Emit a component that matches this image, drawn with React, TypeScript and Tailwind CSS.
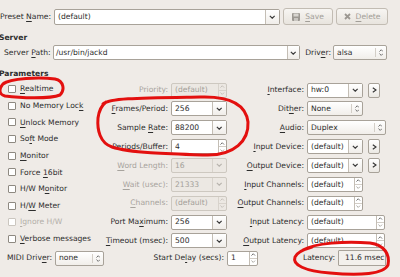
import React from 'react';

type WProps = { value: string; w: string; dim?: boolean };

function Mn({ t, u = -1 }: { t: string; u?: number }) {
  if (u < 0) return <>{t}</>;
  return (
    <>
      {t.slice(0, u)}
      <span className="underline decoration-[0.8px] underline-offset-[1.5px]">{t[u]}</span>
      {t.slice(u + 1)}
    </>
  );
}

function Chev({ up, small, color = '#3b3b3b' }: { up?: boolean; small?: boolean; color?: string }) {
  const w = small ? 4.5 : 6.5;
  const h = small ? 3 : 4;
  return (
    <svg width={w} height={h} viewBox="0 0 6 4">
      <path
        d={up ? 'M0.6 3.4L3 1L5.4 3.4' : 'M0.6 0.8L3 3.2L5.4 0.8'}
        fill="none"
        stroke={color}
        strokeWidth={small ? 1.1 : 1.2}
      />
    </svg>
  );
}

function ComboEntry({ value, w, dim }: WProps) {
  return (
    <div
      className={`flex h-[15px] border rounded-[2px] ${w} ${
        dim ? 'border-[#cdc8c0] bg-[#ece8e3] text-[#a39f99]' : 'border-[#a8a299] bg-white'
      }`}
    >
      <div className="flex-1 flex items-center pl-[3px] overflow-hidden whitespace-nowrap">{value}</div>
      <div
        className={`w-[14px] flex items-center justify-center border-l ${
          dim ? 'border-[#d8d3cc]' : 'border-[#c4beb5] bg-linear-to-b from-white to-[#f0ede9]'
        }`}
      >
        <Chev color={dim ? '#b9b5af' : '#3b3b3b'} />
      </div>
    </div>
  );
}

function Spin({ value, w, dim }: WProps) {
  return (
    <div
      className={`flex h-[15px] border rounded-[2px] ${w} ${
        dim ? 'border-[#cdc8c0] bg-[#ece8e3] text-[#a39f99]' : 'border-[#a8a299] bg-white'
      }`}
    >
      <div className="flex-1 flex items-center pl-[3px] overflow-hidden whitespace-nowrap">{value}</div>
      <div className={`w-[8px] flex flex-col border-l ${dim ? 'border-[#d8d3cc]' : 'border-[#c4beb5]'}`}>
        <div className={`flex-1 flex items-center justify-center border-b ${dim ? 'border-[#d8d3cc]' : 'border-[#d2cdc6]'}`}>
          <Chev up small color={dim ? '#bdb9b3' : '#555'} />
        </div>
        <div className="flex-1 flex items-center justify-center">
          <Chev small color={dim ? '#bdb9b3' : '#9a968f'} />
        </div>
      </div>
    </div>
  );
}

function Combo({ value, w }: WProps) {
  return (
    <div className={`flex h-[15px] border border-[#a8a299] rounded-[2px] bg-linear-to-b from-white to-[#f1eeea] ${w}`}>
      <div className="flex-1 flex items-center pl-[3px] whitespace-nowrap">{value}</div>
      <div className="my-[2px] w-px bg-[#d3cec7]" />
      <div className="w-[10px] flex flex-col items-center justify-center gap-[1px]">
        <Chev up small color="#555" />
        <Chev small color="#555" />
      </div>
    </div>
  );
}

function More() {
  return (
    <div className="ml-[5px] w-[12px] h-[15px] border border-[#a8a299] rounded-[2px] bg-linear-to-b from-white to-[#ebe8e3] flex items-center justify-center">
      <svg width="5" height="6" viewBox="0 0 5 6">
        <path d="M0.8 0.7L4 3L0.8 5.3" fill="none" stroke="#333" strokeWidth="1.1" />
      </svg>
    </div>
  );
}

function Check({ label, u, dim }: { label: string; u: number; dim?: boolean }) {
  return (
    <div className={`h-[16.67px] flex items-center pl-[8px] ${dim ? 'text-[#b3afa9]' : ''}`}>
      <div
        className={`w-[8px] h-[8px] border rounded-[1px] bg-white ${dim ? 'border-[#cbc6bf]' : 'border-[#8e8981]'}`}
      />
      <span className="ml-[4px] whitespace-nowrap">
        <Mn t={label} u={u} />
      </span>
    </div>
  );
}

function Row({
  label,
  u,
  dim,
  lw,
  children,
}: {
  label: string;
  u: number;
  dim?: boolean;
  lw: string;
  children: React.ReactNode;
}) {
  return (
    <div className="h-[18.85px] flex items-center">
      <div className={`${lw} text-right whitespace-nowrap ${dim ? 'text-[#a7a39d]' : ''}`}>
        <Mn t={label} u={u} />
      </div>
      <div className="ml-[3px] flex items-center">{children}</div>
    </div>
  );
}

export default function App() {
  return (
    <div className="relative w-[400px] h-[277px] overflow-hidden bg-[#efebe7] text-[#2d2d2d] text-[7.6px] leading-none font-['DejaVu_Sans',sans-serif]">
      {/* preset */}
      <div className="mt-[8px] h-[17px] flex items-center">
        <div className="w-[54px] whitespace-nowrap">
          Preset <Mn t="Name:" u={0} />
        </div>
        <div className="flex h-[16px] w-[226px] border border-[#a8a299] rounded-[2px] bg-white">
          <div className="flex-1 flex items-center pl-[3px]">(default)</div>
          <div className="w-[14px] flex items-center justify-center border-l border-[#c4beb5] bg-linear-to-b from-white to-[#f0ede9]">
            <Chev />
          </div>
        </div>
        <div className="ml-[3px] w-[50px] h-[17px] border border-[#c2bcb3] rounded-[3px] bg-linear-to-b from-[#f7f5f2] to-[#e8e4de] flex items-center justify-center text-[#a29e98]">
          <svg width="8" height="8" viewBox="0 0 8 8" className="mr-[5px]">
            <rect x="0" y="0" width="8" height="8" rx="1" fill="#9c9892" />
            <rect x="1.5" y="0.5" width="5" height="3" fill="#d8d5d0" />
            <rect x="2" y="5" width="4" height="3" fill="#c9c6c1" />
          </svg>
          <Mn t="Save" u={0} />
        </div>
        <div className="ml-[3px] w-[52px] h-[17px] border border-[#c2bcb3] rounded-[3px] bg-linear-to-b from-[#f7f5f2] to-[#e8e4de] flex items-center justify-center text-[#a29e98]">
          <svg width="7" height="7" viewBox="0 0 7 7" className="mr-[5px]">
            <path d="M1 1L6 6M6 1L1 6" stroke="#9c9892" strokeWidth="1.8" />
          </svg>
          <Mn t="Delete" u={0} />
        </div>
      </div>

      <div className="mt-[8px] h-[10px] flex items-center -ml-[1px] font-bold">Server</div>

      <div className="mt-[2px] h-[15px] flex items-center">
        <div className="w-[53px] pl-[4px] whitespace-nowrap">
          Server <Mn t="Path:" u={0} />
        </div>
        <div className="flex h-[15px] w-[247px] border border-[#a8a299] rounded-[2px] bg-white">
          <div className="flex-1 flex items-center pl-[2px]">/usr/bin/jackd</div>
          <div className="w-[12px] flex items-center justify-center border-l border-[#c4beb5] bg-linear-to-b from-white to-[#f0ede9]">
            <Chev />
          </div>
        </div>
        <div className="w-[33px] text-right pr-[2px] whitespace-nowrap">
          <Mn t="Driver:" u={4} />
        </div>
        <Combo value="alsa" w="w-[54px]" />
      </div>

      <div className="mt-[9px] h-[10px] flex items-center -ml-[1px] font-bold">Parameters</div>

      <div className="mt-[1.7px] flex">
        <div className="w-[100px] flex flex-col">
          <Check label="Realtime" u={0} />
          <Check label="No Memory Lock" u={13} />
          <Check label="Unlock Memory" u={0} />
          <Check label="Soft Mode" u={2} />
          <Check label="Monitor" u={0} />
          <Check label="Force 16bit" u={6} />
          <Check label="H/W Monitor" u={5} />
          <Check label="H/W Meter" u={2} />
          <Check label="Ignore H/W" u={0} dim />
          <Check label="Verbose messages" u={0} />
        </div>
        <div className="flex flex-col">
          <Row label="Priority:" u={-1} dim lw="w-[68px]">
            <Spin value="(default)" w="w-[56px]" dim />
          </Row>
          <Row label="Frames/Period:" u={0} lw="w-[68px]">
            <ComboEntry value="256" w="w-[56px]" />
          </Row>
          <Row label="Sample Rate:" u={7} lw="w-[68px]">
            <ComboEntry value="88200" w="w-[56px]" />
          </Row>
          <Row label="Periods/Buffer:" u={8} lw="w-[68px]">
            <Spin value="4" w="w-[56px]" />
          </Row>
          <Row label="Word Length:" u={0} dim lw="w-[68px]">
            <ComboEntry value="16" w="w-[56px]" dim />
          </Row>
          <Row label="Wait (usec):" u={0} dim lw="w-[68px]">
            <ComboEntry value="21333" w="w-[56px]" dim />
          </Row>
          <Row label="Channels:" u={0} dim lw="w-[68px]">
            <Spin value="(default)" w="w-[56px]" dim />
          </Row>
          <Row label="Port Maximum:" u={7} lw="w-[68px]">
            <ComboEntry value="256" w="w-[56px]" />
          </Row>
          <Row label="Timeout (msec):" u={0} lw="w-[68px]">
            <ComboEntry value="500" w="w-[56px]" />
          </Row>
        </div>
        <div className="flex flex-col">
          <Row label="Interface:" u={0} lw="w-[77px]">
            <ComboEntry value="hw:0" w="w-[56px]" />
            <More />
          </Row>
          <Row label="Dither:" u={3} lw="w-[77px]">
            <Combo value="None" w="w-[56px]" />
          </Row>
          <Row label="Audio:" u={0} lw="w-[77px]">
            <Combo value="Duplex" w="w-[79px]" />
          </Row>
          <Row label="Input Device:" u={0} lw="w-[77px]">
            <ComboEntry value="(default)" w="w-[56px]" />
            <More />
          </Row>
          <Row label="Output Device:" u={0} lw="w-[77px]">
            <ComboEntry value="(default)" w="w-[56px]" />
            <More />
          </Row>
          <Row label="Input Channels:" u={0} lw="w-[77px]">
            <Spin value="(default)" w="w-[56px]" />
          </Row>
          <Row label="Output Channels:" u={0} lw="w-[77px]">
            <Spin value="(default)" w="w-[56px]" />
          </Row>
          <Row label="Input Latency:" u={0} lw="w-[77px]">
            <Spin value="(default)" w="w-[78px]" />
          </Row>
          <Row label="Output Latency:" u={0} lw="w-[77px]">
            <Spin value="(default)" w="w-[78px]" />
          </Row>
        </div>
      </div>

      <div className="h-[16px] flex items-center">
        <div className="w-[55px] pl-[7px] whitespace-nowrap">
          MIDI <Mn t="Driver:" u={4} />
        </div>
        <Combo value="none" w="w-[49px]" />
        <div className="w-[120px] text-right whitespace-nowrap">
          Start <Mn t="Delay (secs):" u={2} />
        </div>
        <div className="ml-[3px]">
          <Spin value="1" w="w-[31px]" />
        </div>
        <div className="w-[77px] text-right whitespace-nowrap">Latency:</div>
        <div className="ml-[3px] w-[48px] h-[16px] border border-[#a8a299] rounded-[1px] bg-[#f3f0ec] flex items-center pl-[6px] overflow-hidden whitespace-nowrap">
          11.6 msec
        </div>
      </div>

      {/* hand-drawn annotations */}
      <svg className="absolute inset-0 pointer-events-none" width="400" height="277" viewBox="0 0 400 277">
        <g fill="none" stroke="#e3100f" strokeWidth="3" strokeLinecap="round" strokeLinejoin="round">
          <path d="M3 84C10 78 40 77 55 79C64 81 65 90 60 95C50 99 20 98 5 96C-2 94 -1 88 4 83" />
          <path d="M103 104C110 98 140 98 200 97C230 96 246 105 248 122C249 140 235 156 205 155C170 154 130 153 112 147C100 143 97 130 98 118C99 110 101 106 106 102" />
          <path d="M303 250C315 243 345 241 370 243C385 245 390 255 388 265C384 274 360 276 330 273C305 271 292 265 295 257C297 252 305 249 312 247" />
        </g>
      </svg>
    </div>
  );
}
